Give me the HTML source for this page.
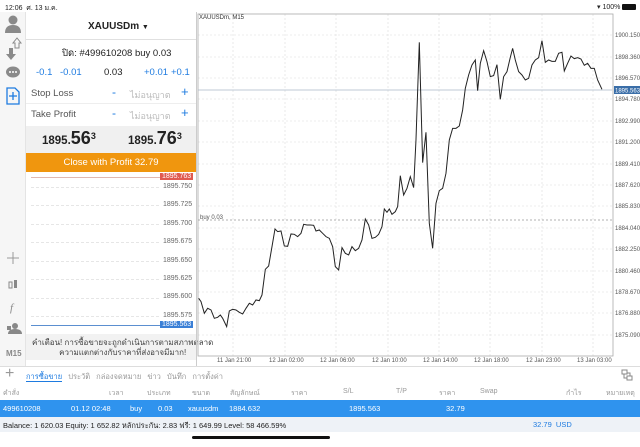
<!DOCTYPE html>
<html><head><meta charset="utf-8"><style>
*{margin:0;padding:0;box-sizing:border-box}
body{width:640px;height:447px;overflow:hidden;background:#fff;font-family:"Liberation Sans","Noto Sans CJK SC",sans-serif;color:#222;position:relative}
.a{position:absolute}
.t{position:absolute;white-space:nowrap}
.dl{position:absolute;left:31px;width:128px;border-top:1px dashed #e6e6e6}
</style></head><body>
<div class="t" style="left:5px;top:3px;font-size:7px">12:06 &nbsp;ศ. 13 ม.ค.</div>
<div class="t" style="left:597px;top:3px;font-size:7px">▾ 100% <span style="display:inline-block;width:14px;height:6px;background:#111;vertical-align:-1px;border-radius:1px"></span></div>

<!-- sidebar -->
<div class="a" style="left:0;top:12px;width:26px;height:354px;background:#f6f6f6;border-right:1px solid #e4e4e4"></div>
<svg class="a" style="left:0;top:12px" width="26" height="354">
<circle cx="13" cy="8" r="4.5" fill="#8a8a8a"/><path d="M5 21 Q5 13 13 13 Q21 13 21 21Z" fill="#8a8a8a"/>
<path d="M9 36 v6 h-3 l5 6 l5-6 h-3 v-6z" fill="#8a8a8a"/><path d="M15 36 v-5 h-2 l4-5 l4 5 h-2 v5z" fill="none" stroke="#8a8a8a"/>
<ellipse cx="13" cy="60" rx="7" ry="5.5" fill="#8a8a8a"/><circle cx="10" cy="60" r="1" fill="#fff"/><circle cx="13" cy="60" r="1" fill="#fff"/><circle cx="16" cy="60" r="1" fill="#fff"/>
<path d="M7 76 h8 l4 4 v12 h-12z" fill="none" stroke="#1e7be0" stroke-width="1.3"/><path d="M13 80 v8 M9 84 h8" stroke="#1e7be0" stroke-width="1.3"/>
<path d="M13 240 v12 M7 246 h12" stroke="#999" stroke-width="1"/>
<rect x="9" y="270" width="3" height="6" fill="none" stroke="#888"/><rect x="14" y="268" width="3" height="8" fill="#888"/>
<text x="10" y="299" font-size="11" font-style="italic" fill="#888" font-family="Liberation Serif">f</text>
<circle cx="15" cy="314" r="3" fill="#888"/><path d="M8 322 q0-5 7-5 q7 0 7 5z" fill="#888"/><rect x="7" y="314" width="4" height="4" fill="#888"/>
</svg>
<div class="t" style="left:6px;top:349px;font-size:8px;color:#888;font-weight:bold">M15</div>

<!-- left panel -->
<div class="a" style="left:26px;top:12px;width:170px;height:28px;border-bottom:1px solid #e0e0e0"></div>
<div class="t" style="left:88px;top:21px;font-size:10px;font-weight:bold">XAUUSDm <span style="font-size:7px">▼</span></div>
<div class="t" style="left:62px;top:46px;font-size:9.5px">ปิด: #499610208 buy 0.03</div>
<div class="t" style="left:36px;top:67px;font-size:9.5px;color:#1e7be0">-0.1</div>
<div class="t" style="left:60px;top:67px;font-size:9.5px;color:#1e7be0">-0.01</div>
<div class="t" style="left:104px;top:67px;font-size:9.5px">0.03</div>
<div class="t" style="left:144px;top:67px;font-size:9.5px;color:#1e7be0">+0.01</div>
<div class="t" style="left:171px;top:67px;font-size:9.5px;color:#1e7be0">+0.1</div>
<div class="t" style="left:31px;top:88px;font-size:9.5px;color:#555">Stop Loss</div>
<div class="t" style="left:112px;top:85px;font-size:12px;color:#1e7be0">-</div>
<div class="t" style="left:130px;top:88px;font-size:9px;color:#bbb">ไม่อนุญาต</div>
<div class="t" style="left:181px;top:84px;font-size:13px;color:#1e7be0">+</div>
<div class="a" style="left:26px;top:103px;width:170px;border-top:1px solid #eee"></div>
<div class="t" style="left:31px;top:109px;font-size:9.5px;color:#555">Take Profit</div>
<div class="t" style="left:112px;top:106px;font-size:12px;color:#1e7be0">-</div>
<div class="t" style="left:130px;top:109px;font-size:9px;color:#bbb">ไม่อนุญาต</div>
<div class="t" style="left:181px;top:105px;font-size:13px;color:#1e7be0">+</div>
<div class="a" style="left:26px;top:126px;width:170px;height:27px;background:#f0f0f0"></div>
<div class="t" style="left:42px;top:128px;font-size:11.5px;font-weight:bold">1895.<span style="font-size:18px">56</span><sup style="font-size:9px">3</sup></div>
<div class="t" style="left:128px;top:128px;font-size:11.5px;font-weight:bold">1895.<span style="font-size:18px">76</span><sup style="font-size:9px">3</sup></div>
<div class="a" style="left:26px;top:153px;width:170px;height:19px;background:#f0960e;color:#fff;font-size:9.5px;text-align:center;line-height:19px">Close with Profit 32.79</div>
<!-- ladder -->
<div class="a" style="left:31px;top:177px;width:130px;border-top:1.5px solid #e2b8b0"></div>
<div class="t" style="left:160px;top:173px;font-size:7px;background:#e05a50;color:#fff;padding:0 2px">1895.763</div>
<div class="dl" style="top:187px"></div><div class="dl" style="top:205px"></div><div class="dl" style="top:224px"></div><div class="dl" style="top:242px"></div><div class="dl" style="top:261px"></div><div class="dl" style="top:279px"></div><div class="dl" style="top:298px"></div><div class="dl" style="top:316px"></div>
<div class="t" style="left:163px;top:178px;font-size:7px;color:#666;line-height:18.4px">1895.750<br>1895.725<br>1895.700<br>1895.675<br>1895.650<br>1895.625<br>1895.600<br>1895.575</div>
<div class="a" style="left:31px;top:325px;width:130px;border-top:1px solid #5b8fd0"></div>
<div class="t" style="left:160px;top:321px;font-size:7px;background:#3a7fd6;color:#fff;padding:0 2px">1895.563</div>
<div class="a" style="left:26px;top:334px;width:170px;height:26px;background:#f2f2f2"></div>
<div class="t" style="left:32px;top:338px;font-size:8px;color:#444;line-height:10px;text-align:center">คำเตือน! การซื้อขายจะถูกดำเนินการตามสภาพตลาด<br>ความแตกต่างกับราคาที่ส่งอาจมีมาก!</div>
<div class="a" style="left:196px;top:12px;width:1px;height:354px;background:#ccc"></div>

<!-- chart -->
<svg class="a" style="left:196px;top:12px" width="444" height="354" viewBox="196 12 444 354">
<g stroke="#ddd" stroke-dasharray="2,2" stroke-width="0.6">
<path d="M198 35H612M198 57H612M198 78H612M198 99H612M198 121H612M198 142H612M198 164H612M198 185H612M198 206H612M198 228H612M198 249H612M198 271H612M198 292H612M198 313H612M198 335H612"/>
<path d="M233 14V356M285 14V356M336 14V356M388 14V356M439 14V356M490 14V356M542 14V356M593 14V356"/>
</g>
<rect x="198" y="14" width="415" height="342" fill="none" stroke="#aaa" stroke-width="0.8"/>
<line x1="198" y1="220" x2="612" y2="220" stroke="#999" stroke-dasharray="2,2" stroke-width="0.7"/>
<line x1="198" y1="90" x2="612" y2="90" stroke="#aab8c8" stroke-width="0.8"/>
<text x="199" y="19" font-size="6" fill="#333">XAUUSDm, M15</text>
<text x="200" y="219" font-size="6" fill="#555">buy 0.03</text>
<g font-size="6" fill="#555">
<text x="615" y="37">1900.150</text><text x="615" y="59">1898.360</text><text x="615" y="80">1896.570</text><text x="615" y="101">1894.780</text><text x="615" y="123">1892.990</text><text x="615" y="144">1891.200</text><text x="615" y="166">1889.410</text><text x="615" y="187">1887.620</text><text x="615" y="208">1885.830</text><text x="615" y="230">1884.040</text><text x="615" y="251">1882.250</text><text x="615" y="273">1880.460</text><text x="615" y="294">1878.670</text><text x="615" y="315">1876.880</text><text x="615" y="337">1875.090</text>
<text x="217" y="362">11 Jan 21:00</text><text x="269" y="362">12 Jan 02:00</text><text x="320" y="362">12 Jan 06:00</text><text x="372" y="362">12 Jan 10:00</text><text x="423" y="362">12 Jan 14:00</text><text x="474" y="362">12 Jan 18:00</text><text x="526" y="362">12 Jan 23:00</text><text x="577" y="362">13 Jan 03:00</text>
</g>
<rect x="614" y="86" width="26" height="8" fill="#3a6ea8"/><text x="615" y="92.5" font-size="6" fill="#fff">1895.563</text>
<g transform="translate(196,0) scale(0.3333)">
<polyline fill="none" stroke="#222" stroke-width="3" points="8,895 15,905 25,940 35,925 45,930 55,955 65,952 73,945 80,955 92,980 100,933 110,928 120,930 130,937 140,942 150,925 160,910 170,915 180,900 190,902 198,885 208,808 218,798 228,740 237,687 245,695 255,693 265,738 275,739 285,702 295,703 305,710 315,700 323,673 333,675 343,675 353,676 360,693 370,690 380,700 390,710 400,715 410,740 418,800 428,810 438,743 448,760 458,765 468,740 478,752 488,745 498,720 508,657 518,675 528,715 538,712 548,703 558,680 565,627 573,637 580,627 588,643 598,635 605,620 613,527 623,585 633,565 643,530 653,563 660,420 670,127 680,488 690,397 700,670 710,745 720,610 730,572 740,565 750,520 760,420 770,385 780,385 790,378 800,330 808,265 818,225 828,195 838,180 845,272 853,190 863,152 873,185 883,230 893,227 903,194 913,298 923,230 933,215 943,172 950,145 958,180 968,215 978,225 988,240 998,235 1008,195 1018,180 1028,173 1038,122 1048,187 1058,180 1068,184 1078,184 1088,160 1098,157 1105,213 1115,190 1125,168 1135,176 1145,173 1155,177 1165,196 1175,190 1185,205 1195,205 1205,240 1218,268"/>
</g>
</svg>

<!-- bottom -->
<div class="a" style="left:0;top:366px;width:640px;border-top:1px solid #ddd"></div>
<div class="t" style="left:5px;top:365px;font-size:16px;color:#999;font-weight:200">+</div>
<div class="t" style="left:26px;top:371px;font-size:7.5px;color:#999;word-spacing:4px"><span style="color:#1e7be0;border-bottom:1.5px solid #1e7be0">การซื้อขาย</span> ประวัติ กล่องจดหมาย ข่าว บันทึก การตั้งค่า</div>
<svg class="a" style="left:621px;top:369px" width="12" height="12"><path d="M1 1h5v4h-5zM6 7h5v4h-5zM3 5v4h3M9 7V4H6" fill="none" stroke="#888"/></svg>
<div class="a" style="left:0;top:385px;width:640px;height:15px;font-size:7px;color:#999">
<span class="t" style="left:3px;top:3px">คำสั่ง</span><span class="t" style="left:109px;top:3px">เวลา</span><span class="t" style="left:147px;top:3px">ประเภท</span><span class="t" style="left:192px;top:3px">ขนาด</span><span class="t" style="left:230px;top:3px">สัญลักษณ์</span><span class="t" style="left:291px;top:3px">ราคา</span><span class="t" style="left:343px;top:3px">S/L</span><span class="t" style="left:396px;top:3px">T/P</span><span class="t" style="left:439px;top:3px">ราคา</span><span class="t" style="left:480px;top:3px">Swap</span><span class="t" style="left:566px;top:3px">กำไร</span><span class="t" style="left:606px;top:3px">หมายเหตุ</span></div>
<div class="a" style="left:0;top:400px;width:640px;height:17px;background:#2f93ee;font-size:7.5px;color:#fff">
<span class="t" style="left:3px;top:4px">499610208</span><span class="t" style="left:71px;top:4px">01.12 02:48</span><span class="t" style="left:130px;top:4px">buy</span><span class="t" style="left:158px;top:4px">0.03</span><span class="t" style="left:188px;top:4px">xauusdm</span><span class="t" style="left:229px;top:4px">1884.632</span><span class="t" style="left:349px;top:4px">1895.563</span><span class="t" style="left:446px;top:4px">32.79</span></div>
<div class="a" style="left:0;top:417px;width:640px;height:15px;background:#eef2f7;font-size:7.5px">
<span class="t" style="left:3px;top:3px">Balance: 1 620.03 Equity: 1 652.82 หลักประกัน: 2.83 ฟรี: 1 649.99 Level: 58 466.59%</span><span class="t" style="left:533px;top:3px;color:#1e7be0">32.79 &nbsp;USD</span></div>
<div class="a" style="left:192px;top:436px;width:138px;height:3px;background:#111;border-radius:2px"></div>
</body></html>
